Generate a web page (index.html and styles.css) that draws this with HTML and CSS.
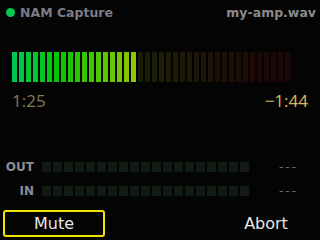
FILE: index.html
```html
<html>
<head>
    <title>NAM Capture</title>
    <link rel="stylesheet" href="styles.css">
</head>
<body>
    <div class="screen">
        <div class="header">
            <div class="dot"></div>
            <div class="title">NAM Capture</div>
            <div class="file">my-amp.wav</div>
        </div>

        <div class="meter" id="meter"></div>

        <div class="times">
            <span class="elapsed">1:25</span>
            <span class="remaining">&minus;1:44</span>
        </div>

        <div class="levels">
            <div class="level-row">
                <div class="level-label">OUT</div>
                <div class="level-bar" id="out-bar"></div>
                <div class="level-value">---</div>
            </div>
            <div class="level-row">
                <div class="level-label">IN</div>
                <div class="level-bar" id="in-bar"></div>
                <div class="level-value">---</div>
            </div>
        </div>

        <div class="buttons">
            <div class="btn selected">Mute</div>
            <div class="btn"></div>
            <div class="btn">Abort</div>
        </div>
    </div>

    <script>
        const meter = document.getElementById('meter');
        const segments = 40;
        const lit = 18;

        for (let i = 0; i < segments; i++) {
            const seg = document.createElement('div');
            const hue = Math.max(0, 145 - i * 4);
            seg.className = 'seg';
            if (i < lit) {
                seg.style.background = `hsl(${hue}, 100%, 39%)`;
            } else {
                seg.style.background = `hsl(${hue}, 65%, 7%)`;
            }
            meter.appendChild(seg);
        }

        ['out-bar', 'in-bar'].forEach((id) => {
            const bar = document.getElementById(id);
            for (let i = 0; i < 19; i++) {
                const cell = document.createElement('div');
                cell.className = 'cell';
                bar.appendChild(cell);
            }
        });
    </script>
</body>
</html>
```

FILE: styles.css
```css
body {
    margin: 0;
    background-color: #040404;
    color: #e0e0e0;
    font-family: "DejaVu Sans", sans-serif;
}

.screen {
    width: 320px;
    height: 240px;
    display: flex;
    flex-direction: column;
    overflow: hidden;
}

.header {
    height: 24px;
    display: flex;
    align-items: center;
    padding: 0 4px 0 6px;
    font-weight: bold;
    font-size: 12.5px;
}

.dot {
    width: 9px;
    height: 9px;
    border-radius: 50%;
    background-color: #00c853;
    margin-right: 5px;
}

.title {
    color: #7c7c88;
}

.file {
    margin-left: auto;
    color: #8a8a8a;
}

.meter {
    display: flex;
    gap: 2px;
    margin-top: 28px;
    padding-left: 12px;
    height: 30px;
}

.seg {
    width: 5px;
    height: 30px;
}

.times {
    display: flex;
    justify-content: space-between;
    margin-top: 8px;
    padding: 0 12px;
    font-family: "Open Sans", sans-serif;
    font-size: 17px;
    line-height: 21px;
}

.elapsed {
    color: #857a58;
}

.remaining {
    color: #d9b85a;
}

.levels {
    margin-top: 51px;
    display: flex;
    flex-direction: column;
    gap: 14px;
}

.level-row {
    display: flex;
    align-items: center;
    height: 10px;
}

.level-label {
    width: 34px;
    text-align: right;
    font-weight: bold;
    font-size: 12px;
    color: #8c8c94;
}

.level-bar {
    display: flex;
    gap: 2px;
    margin-left: 8px;
}

.cell {
    width: 9px;
    height: 10px;
    background-color: #111a13;
}

.level-value {
    margin-left: 30px;
    font-size: 12px;
    letter-spacing: 2px;
    color: #6e6e6e;
}

.buttons {
    margin-top: auto;
    margin-bottom: 3px;
    padding: 0 3px;
    display: grid;
    grid-template-columns: 1fr 1fr 1fr;
    gap: 4px;
}

.btn {
    height: 27px;
    box-sizing: border-box;
    display: flex;
    align-items: center;
    justify-content: center;
    font-size: 16px;
    color: #e6e6e6;
    border: 2px solid transparent;
    border-radius: 3px;
}

.btn.selected {
    border-color: #f0e400;
}
```
